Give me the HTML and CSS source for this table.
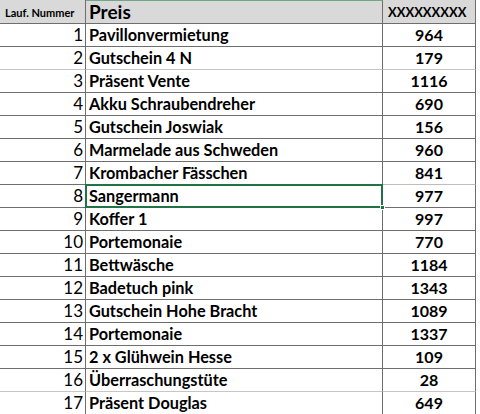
FILE: index.html
```html
<!DOCTYPE html>
<html lang="de">
<head>
<meta charset="utf-8">
<title>Preisliste</title>
<link rel="stylesheet" href="styles.css">
</head>
<body>
<table class="sheet">
  <colgroup>
    <col class="col-a">
    <col class="col-b">
    <col class="col-c">
  </colgroup>
  <thead>
    <tr class="head">
      <th class="num-head">Lauf. Nummer</th>
      <th class="name-head">Preis</th>
      <th class="val-head">XXXXXXXXX</th>
    </tr>
  </thead>
  <tbody>
    <tr><td class="num">1</td><td class="name">Pavillonvermietung</td><td class="val">964</td></tr>
    <tr class="light"><td class="num">2</td><td class="name">Gutschein 4 N</td><td class="val">179</td></tr>
    <tr><td class="num">3</td><td class="name">Präsent Vente</td><td class="val">1116</td></tr>
    <tr><td class="num">4</td><td class="name">Akku Schraubendreher</td><td class="val">690</td></tr>
    <tr><td class="num">5</td><td class="name">Gutschein Joswiak</td><td class="val">156</td></tr>
    <tr><td class="num">6</td><td class="name">Marmelade aus Schweden</td><td class="val">960</td></tr>
    <tr class="pre-sel"><td class="num">7</td><td class="name">Krombacher Fässchen</td><td class="val">841</td></tr>
    <tr><td class="num">8</td><td class="name selected">Sangermann<span class="handle"></span></td><td class="val">977</td></tr>
    <tr><td class="num">9</td><td class="name">Koffer 1</td><td class="val">997</td></tr>
    <tr><td class="num">10</td><td class="name">Portemonaie</td><td class="val">770</td></tr>
    <tr><td class="num">11</td><td class="name">Bettwäsche</td><td class="val">1184</td></tr>
    <tr><td class="num">12</td><td class="name">Badetuch pink</td><td class="val">1343</td></tr>
    <tr><td class="num">13</td><td class="name">Gutschein Hohe Bracht</td><td class="val">1089</td></tr>
    <tr><td class="num">14</td><td class="name">Portemonaie</td><td class="val">1337</td></tr>
    <tr><td class="num">15</td><td class="name">2 x Glühwein Hesse</td><td class="val">109</td></tr>
    <tr class="light"><td class="num">16</td><td class="name">Überraschungstüte</td><td class="val">28</td></tr>
    <tr><td class="num">17</td><td class="name">Präsent Douglas</td><td class="val">649</td></tr>
  </tbody>
</table>
</body>
</html>
```

FILE: styles.css
```css
html, body {
  margin: 0;
  padding: 0;
  background: #ffffff;
}

body {
  font-family: Lato, "Open Sans", sans-serif;
  color: #000000;
  overflow: hidden;
}

.sheet {
  border-collapse: separate;
  border-spacing: 0;
  table-layout: fixed;
  width: 476px;
}

.col-a { width: 86px; }
.col-b { width: 297px; }
.col-c { width: 93px; }

.sheet th,
.sheet td {
  height: 22px;
  padding: 0;
  border-right: 1px solid #6e6e6e;
  border-bottom: 1px solid #6e6e6e;
  white-space: nowrap;
  overflow: visible;
  line-height: 22px;
}

.head th {
  background: #d9d9d9;
  font-weight: 700;
  text-align: left;
}

.num-head {
  font-size: 11px;
  padding-left: 5px !important;
  vertical-align: bottom;
  line-height: 20px !important;
}

.name-head {
  font-size: 19px;
  padding-left: 3px !important;
  border-top: 1px solid #6fa886;
  height: 21px !important;
}

.val-head {
  font-size: 13px;
  padding-left: 5px !important;
}

.num {
  text-align: right;
  font-size: 17px;
  padding-right: 2px !important;
}

.name {
  font-size: 16.3px;
  font-weight: 700;
  padding-left: 3px !important;
}

.val {
  font-size: 16px;
  font-weight: 700;
  text-align: center;
}

.light td {
  border-bottom-color: #c6c6c6;
}

.pre-sel .val {
  border-bottom: 1px solid #bdbdbd;
}

.selected {
  position: relative;
}

.selected::before {
  content: "";
  position: absolute;
  left: -1px;
  top: -1px;
  right: -1px;
  bottom: -1px;
  border: 2px solid #217346;
  pointer-events: none;
}

.handle {
  position: absolute;
  right: -3px;
  bottom: -3px;
  width: 5px;
  height: 5px;
  background: #217346;
  border: 1px solid #ffffff;
  box-sizing: border-box;
}
```
